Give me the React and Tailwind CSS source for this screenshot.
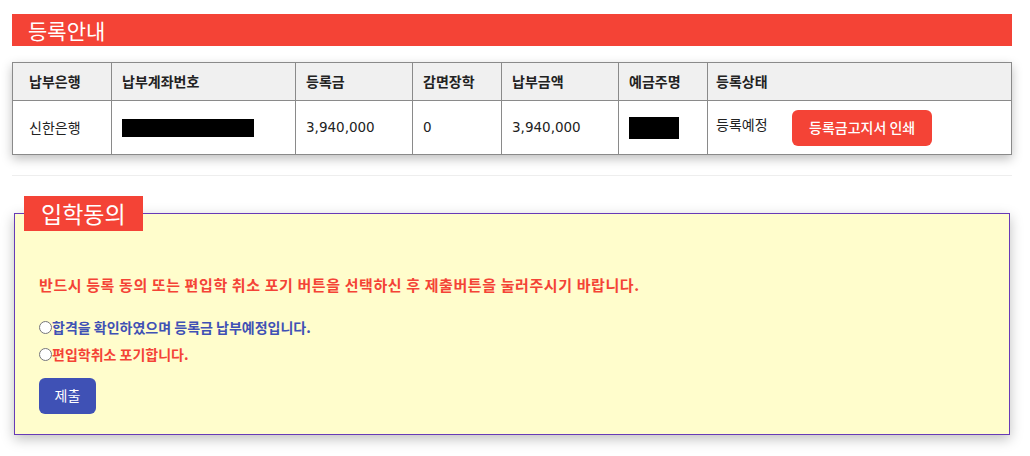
export default function App() {
  const cols = [
    { label: '납부은행', w: 'w-[99px] px-[16px]' },
    { label: '납부계좌번호', w: 'w-[184px] px-[10px]' },
    { label: '등록금', w: 'w-[117px] px-[10px]' },
    { label: '감면장학', w: 'w-[89px] px-[10px]' },
    { label: '납부금액', w: 'w-[117px] px-[10px]' },
    { label: '예금주명', w: 'w-[89px] px-[10px]' },
    { label: '등록상태', w: 'px-[8px]' },
  ];

  return (
    <div className="min-h-[456px] bg-white pl-3 pr-[18px] pt-[14px] text-[14px] text-[#222] font-['Noto_Sans_CJK_KR','Noto_Sans',sans-serif]">
      {/* 등록안내 */}
      <div className="h-8 bg-[#f44336] pl-4 text-[21px] leading-8 text-white">등록안내</div>

      <table className="mt-[16px] w-full border-collapse border border-[#8a8a8a] shadow-[0_4px_10px_rgba(0,0,0,0.25)]">
        <thead>
          <tr className="h-[38px] bg-[#f0f0f0]">
            {cols.map((c) => (
              <th key={c.label} className={`${c.w} border border-[#8a8a8a] text-left font-bold`}>
                {c.label}
              </th>
            ))}
          </tr>
        </thead>
        <tbody>
          <tr className="h-[54px]">
            <td className="border border-[#8a8a8a] px-[16px]">신한은행</td>
            <td className="border border-[#8a8a8a] px-[10px]">
              <div className="h-[18px] w-[132px] bg-black" />
            </td>
            <td className="border border-[#8a8a8a] px-[10px] font-['DejaVu_Sans',sans-serif] text-[13.5px]">3,940,000</td>
            <td className="border border-[#8a8a8a] px-[10px] font-['DejaVu_Sans',sans-serif] text-[13.5px]">0</td>
            <td className="border border-[#8a8a8a] px-[10px] font-['DejaVu_Sans',sans-serif] text-[13.5px]">3,940,000</td>
            <td className="border border-[#8a8a8a] px-[10px]">
              <div className="h-[22px] w-[50px] bg-black" />
            </td>
            <td className="border border-[#8a8a8a] px-[8px]">
              <div className="flex items-center">
                <span className="-mt-[6px] w-[76px]">등록예정</span>
                <button className="h-9 rounded-md bg-[#f44336] px-[17px] text-[14px] font-medium text-white">등록금고지서 인쇄</button>
              </div>
            </td>
          </tr>
        </tbody>
      </table>

      <div className="mt-[20px] border-t border-[#eeeeee]" />

      {/* 입학동의 */}
      <fieldset className="mx-[2px] mt-[20px] border border-[#673ab7] bg-[#fffdcc] px-6 pb-5 shadow-[0_4px_12px_rgba(0,0,0,0.25)]">
        <legend className="ml-[-15px] h-[35px] bg-[#f44336] px-[17px] text-[23px] leading-[35px] text-white">입학동의</legend>
        <p className="mt-[43px] text-[15px] font-bold tracking-[0.6px] text-[#f44336]">
          반드시 등록 동의 또는 편입학 취소 포기 버튼을 선택하신 후 제출버튼을 눌러주시기 바랍니다.
        </p>
        <label className="mt-[20px] flex items-center text-[14px] font-bold text-[#3f51b5]">
          <input type="radio" name="agree" className="m-0 h-[13px] w-[13px]" />
          합격을 확인하였으며 등록금 납부예정입니다.
        </label>
        <label className="mt-[6px] flex items-center text-[14px] font-bold text-[#f44336]">
          <input type="radio" name="agree" className="m-0 h-[13px] w-[13px]" />
          편입학취소 포기합니다.
        </label>
        <button className="mt-[13px] h-9 w-[57px] rounded-md bg-[#3f51b5] text-[14px] text-white">제출</button>
      </fieldset>
    </div>
  );
}
